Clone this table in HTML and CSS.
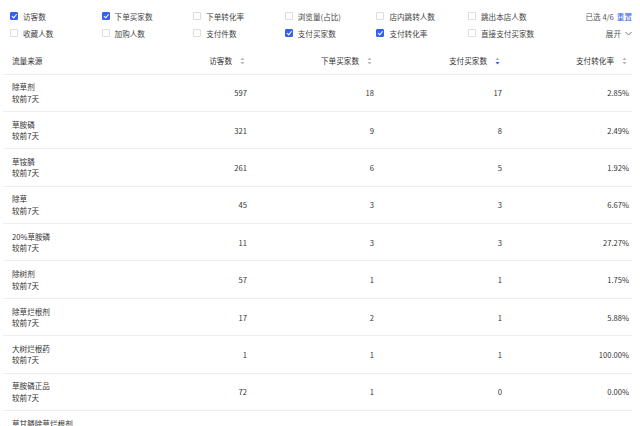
FILE: index.html
```html
<!DOCTYPE html>
<html lang="zh">
<head>
<meta charset="utf-8">
<link rel="stylesheet" href="styles.css">
</head>
<body>
<div class="filters">
  <label class="opt"><span class="cb on"></span>访客数</label>
  <label class="opt"><span class="cb on"></span>下单买家数</label>
  <label class="opt"><span class="cb"></span>下单转化率</label>
  <label class="opt"><span class="cb"></span>浏览量(占比)</label>
  <label class="opt"><span class="cb"></span>店内跳转人数</label>
  <label class="opt"><span class="cb"></span>跳出本店人数</label>
  <div class="side">已选 4/6 <a class="link">重置</a></div>
  <label class="opt"><span class="cb"></span>收藏人数</label>
  <label class="opt"><span class="cb"></span>加购人数</label>
  <label class="opt"><span class="cb"></span>支付件数</label>
  <label class="opt"><span class="cb on"></span>支付买家数</label>
  <label class="opt"><span class="cb on"></span>支付转化率</label>
  <label class="opt"><span class="cb"></span>直接支付买家数</label>
  <div class="side">展开 <svg class="chev" width="7" height="5" viewBox="0 0 7 5"><path d="M0.5 1 L3.5 4 L6.5 1" fill="none" stroke="#777" stroke-width="1"/></svg></div>
</div>

<div class="table">
  <div class="row head">
    <div class="c name">流量来源</div>
    <div class="c num">访客数<svg class="sort" width="5" height="8" viewBox="0 0 5 8"><path d="M2.5 0.5 L4.5 3 L0.5 3Z" fill="#b8b8b8"/><path d="M2.5 7.5 L4.5 5 L0.5 5Z" fill="#b8b8b8"/></svg></div>
    <div class="c num">下单买家数<svg class="sort" width="5" height="8" viewBox="0 0 5 8"><path d="M2.5 0.5 L4.5 3 L0.5 3Z" fill="#b8b8b8"/><path d="M2.5 7.5 L4.5 5 L0.5 5Z" fill="#b8b8b8"/></svg></div>
    <div class="c num">支付买家数<svg class="sort" width="5" height="8" viewBox="0 0 5 8"><path d="M2.5 0.5 L4.5 3 L0.5 3Z" fill="#b8b8b8"/><path d="M2.5 7.5 L4.5 5 L0.5 5Z" fill="#2f5cf0"/></svg></div>
    <div class="c num">支付转化率<svg class="sort" width="5" height="8" viewBox="0 0 5 8"><path d="M2.5 0.5 L4.5 3 L0.5 3Z" fill="#b8b8b8"/><path d="M2.5 7.5 L4.5 5 L0.5 5Z" fill="#b8b8b8"/></svg></div>
  </div>
  <div class="row"><div class="c name"><div>除草剂</div><div>较前7天</div></div><div class="c num">597</div><div class="c num">18</div><div class="c num">17</div><div class="c num">2.85%</div></div>
  <div class="row"><div class="c name"><div>草胺磷</div><div>较前7天</div></div><div class="c num">321</div><div class="c num">9</div><div class="c num">8</div><div class="c num">2.49%</div></div>
  <div class="row"><div class="c name"><div>草铵膦</div><div>较前7天</div></div><div class="c num">261</div><div class="c num">6</div><div class="c num">5</div><div class="c num">1.92%</div></div>
  <div class="row"><div class="c name"><div>除草</div><div>较前7天</div></div><div class="c num">45</div><div class="c num">3</div><div class="c num">3</div><div class="c num">6.67%</div></div>
  <div class="row"><div class="c name"><div>20%草胺磷</div><div>较前7天</div></div><div class="c num">11</div><div class="c num">3</div><div class="c num">3</div><div class="c num">27.27%</div></div>
  <div class="row"><div class="c name"><div>除树剂</div><div>较前7天</div></div><div class="c num">57</div><div class="c num">1</div><div class="c num">1</div><div class="c num">1.75%</div></div>
  <div class="row"><div class="c name"><div>除草烂根剂</div><div>较前7天</div></div><div class="c num">17</div><div class="c num">2</div><div class="c num">1</div><div class="c num">5.88%</div></div>
  <div class="row"><div class="c name"><div>大树烂根药</div><div>较前7天</div></div><div class="c num">1</div><div class="c num">1</div><div class="c num">1</div><div class="c num">100.00%</div></div>
  <div class="row"><div class="c name"><div>草胺磷正品</div><div>较前7天</div></div><div class="c num">72</div><div class="c num">1</div><div class="c num">0</div><div class="c num">0.00%</div></div>
  <div class="row"><div class="c name"><div>草甘膦除草烂根剂</div><div>较前7天</div></div><div class="c num">33</div><div class="c num">2</div><div class="c num">1</div><div class="c num">3.03%</div></div>
</div>
</body>
</html>
```

FILE: styles.css
```css
html, body {
  margin: 0;
  padding: 0;
  background: #fff;
}
body {
  font-family: "Noto Sans CJK SC", "Noto Sans", sans-serif;
  font-size: 7.6px;
  color: #333;
  overflow: hidden;
  height: 426px;
}
.filters {
  display: grid;
  grid-template-columns: repeat(6, 91.6px) 1fr;
  grid-auto-rows: 17px;
  padding: 7.5px 8px 0 10px;
  align-items: center;
}
.opt {
  display: flex;
  align-items: center;
  gap: 5px;
  white-space: nowrap;
  color: #444;
}
.cb {
  width: 8px;
  height: 8px;
  border: 1px solid #dcdcdc;
  border-radius: 1px;
  box-sizing: border-box;
  background: #fff;
  flex: none;
  position: relative;
}
.cb.on {
  background: #3462ee;
  border-color: #3462ee;
}
.cb.on::after {
  content: "";
  position: absolute;
  left: 2px;
  top: 0.4px;
  width: 1.8px;
  height: 3.5px;
  border: solid #fff;
  border-width: 0 1px 1px 0;
  transform: rotate(40deg);
}
.side {
  justify-self: end;
  display: flex;
  align-items: center;
  gap: 3px;
  white-space: nowrap;
  color: #555;
}
.link {
  color: #3462ee;
}
.chev {
  margin-left: 1px;
}
.table {
  margin: 6.5px 8px 0 3px;
}
.row {
  display: grid;
  grid-template-columns: 117px 130px 127px 128px 127px;
  height: 37.4px;
  box-sizing: border-box;
  border-bottom: 1px solid #efefef;
  align-items: center;
}
.row.head {
  height: 26.5px;
}
.c.name {
  padding-left: 9px;
  line-height: 11.5px;
}
.c.num {
  text-align: right;
  padding-right: 3px;
  display: flex;
  justify-content: flex-end;
  align-items: center;
}
.head .c.num {
  padding-right: 5px;
}
.sort {
  margin-left: 8px;
}
```
